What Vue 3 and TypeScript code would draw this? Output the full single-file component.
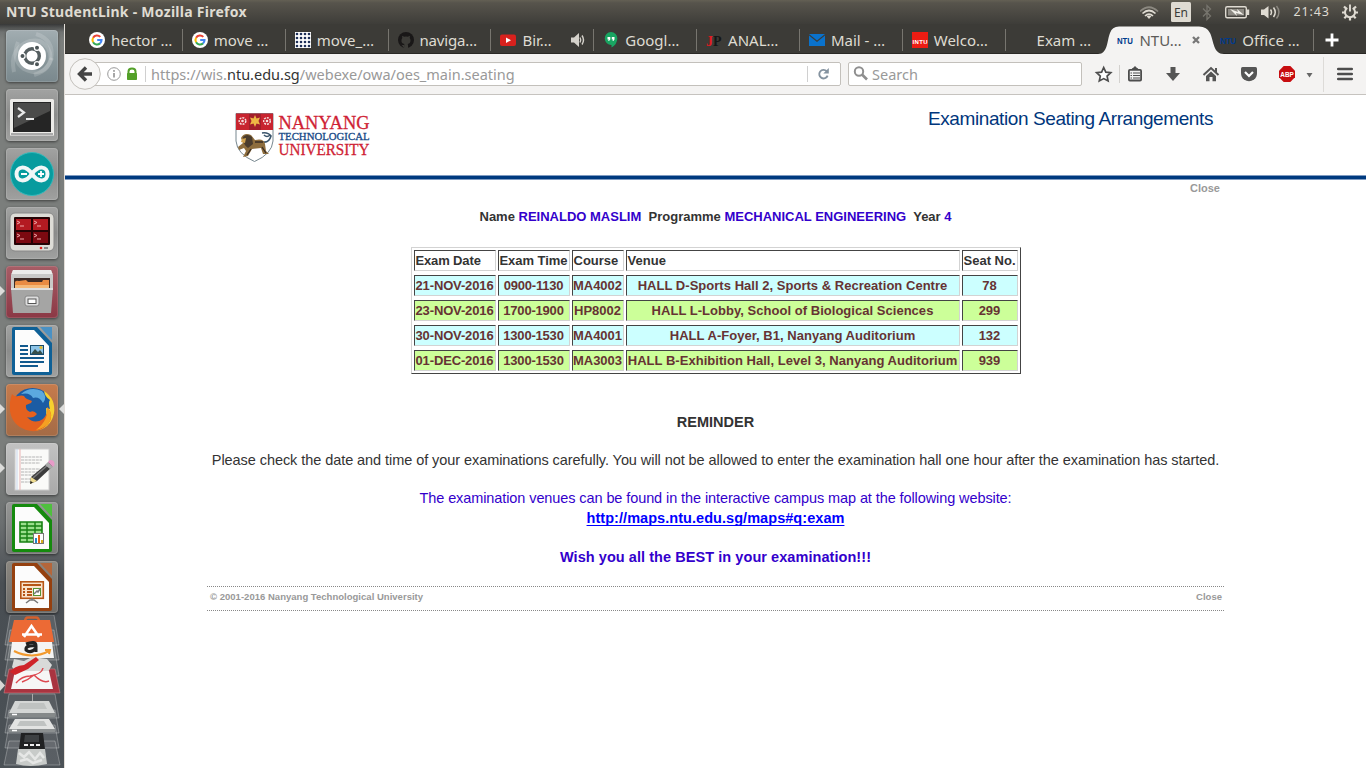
<script setup lang="ts">
interface Tab { label: string; icon: string; sep: boolean; sound?: boolean }
const tabs: Tab[] = [
  { label: 'hector …', icon: 'google', sep: true },
  { label: 'move …', icon: 'google', sep: true },
  { label: 'move_…', icon: 'dots', sep: true },
  { label: 'naviga…', icon: 'github', sep: true },
  { label: 'Bir…', icon: 'youtube', sep: true, sound: true },
  { label: 'Googl…', icon: 'hangouts', sep: true },
  { label: 'ANAL…', icon: 'jp', sep: true },
  { label: 'Mail - …', icon: 'mail', sep: true },
  { label: 'Welco…', icon: 'intu', sep: true },
  { label: 'Exam …', icon: 'blank', sep: false },
  { label: 'NTU…', icon: 'ntu', sep: false },
  { label: 'Office …', icon: 'ntu', sep: true },
]
const activeTab = 10

const launchers = ['dash', 'terminal', 'arduino', 'terminator', 'files', 'writer', 'firefox', 'gedit', 'calc', 'impress']
const running = ['files', 'firefox', 'gedit']

const columns = ['date', 'time', 'course', 'venue', 'seat']
const heads = ['Exam Date', 'Exam Time', 'Course', 'Venue', 'Seat No.']
const exams = [
  ['21-NOV-2016', '0900-1130', 'MA4002', 'HALL D-Sports Hall 2, Sports & Recreation Centre', '78'],
  ['23-NOV-2016', '1700-1900', 'HP8002', 'HALL L-Lobby, School of Biological Sciences', '299'],
  ['30-NOV-2016', '1300-1530', 'MA4001', 'HALL A-Foyer, B1, Nanyang Auditorium', '132'],
  ['01-DEC-2016', '1300-1530', 'MA3003', 'HALL B-Exhibition Hall, Level 3, Nanyang Auditorium', '939'],
]
</script>

<template>
  <div class="desktop">
    <header class="panel">
      <span class="wintitle">NTU StudentLink - Mozilla Firefox</span>
      <svg class="indicators" width="226" height="24" viewBox="1140 0 226 24">
        <g fill="none" stroke-width="1.7">
          <path d="M1140 11.5Q1149 3 1158 11.5" stroke="#8b8880" />
          <path d="M1142.500 13.500Q1149 7.500 1155.500 13.500M1145 16Q1149 12 1153 16" stroke="#dfdbd2" />
        </g>
        <path d="M1146.600 16.300Q1149 14.600 1151.400 16.300L1149 19z" fill="#dfdbd2" />
        <rect x="1171" y="2" width="20" height="20" rx="1.500" fill="#dfdbd2" />
        <text x="1174" y="17" font-size="12" textLength="14" fill="#3c3b37" class="ui">En</text>
        <path d="M1203 8.500L1210.500 16L1207 19.500V5.500L1210.500 9L1203 16.500" fill="none" stroke="#77756e" stroke-width="1.300" />
        <rect x="1225.700" y="6.700" width="20.600" height="11" rx="1.500" fill="none" stroke="#dfdbd2" stroke-width="1.400" />
        <rect x="1228" y="9" width="16" height="6.500" fill="#8d8a83" />
        <rect x="1247" y="9.500" width="2.200" height="5.500" fill="#dfdbd2" />
        <path d="M1230 9L1238 12L1237 9L1244 15L1236 13L1237 16z" fill="#f2f0ea" />
        <path d="M1261 9.500H1264L1268.500 6V18.500L1264 15H1261z" fill="#dfdbd2" />
        <path d="M1270.500 9.500Q1272.500 12.200 1270.500 15M1273.500 7.500Q1277 12.200 1273.500 17" fill="none" stroke="#dfdbd2" stroke-width="1.500" />
        <path d="M1276.500 6Q1281.500 12.200 1276.500 18.500" fill="none" stroke="#8b8880" stroke-width="1.400" />
        <text x="1293.500" y="16" font-size="12.500" textLength="35.500" fill="#dfdbd2" class="ui">21:43</text>
        <g fill="none" stroke="#dfdbd2">
          <path d="M1347.300 8A5 5 0 1 0 1352.700 8" stroke-width="2" />
          <path d="M1350 4.500V11.500" stroke-width="1.900" />
          <path d="M1342 12.500H1345M1355 12.500H1358M1350 17V20.500M1344 6.500L1346.300 8.800M1356 6.500L1353.700 8.800M1344.300 18.200L1346.300 16.200M1355.700 18.200L1353.700 16.200" stroke-width="2.200" />
        </g>
      </svg>
    </header>

    <div class="workspace">
      <aside class="launcher">
        <div v-for="l in launchers" :key="l" class="tile" :class="l">
          <i v-if="running.includes(l)" class="pip"></i>
          <i v-if="l === 'firefox'" class="pip right"></i>
          <svg width="52" height="52" viewBox="0 0 52 52">
            <g v-if="l === 'dash'">
              <g fill="none" stroke="#fff" stroke-opacity=".16" stroke-width="4">
                <path d="M8 42Q3 18 24 11Q39 8 44 23Q47 39 28 45" />
                <path d="M12 12Q5 30 18 39Q38 49 46 28" />
                <path d="M30 4Q49 10 45 30" />
              </g>
              <circle cx="26" cy="26" r="14" fill="#fff" />
              <circle cx="26" cy="26" r="7.300" fill="none" stroke="#555e60" stroke-width="3.400" />
              <g stroke="#fff" stroke-width="1.200" fill="#4c5557"><circle cx="16.500" cy="26" r="2.600" /><circle cx="31" cy="17.700" r="2.600" /><circle cx="31" cy="34.300" r="2.600" /></g>
            </g>
            <g v-else-if="l === 'terminal'">
              <rect x="4" y="10" width="44" height="37" rx="1.500" fill="#ecebe8" />
              <rect x="5" y="44" width="42" height="2.500" fill="#aaa" />
              <rect x="7" y="13" width="38" height="30" fill="#252525" />
              <path d="M8 14H44V22L8 39z" fill="#4b4b4a" />
              <path d="M12 19L18 23.500L12 28M20 30H28" fill="none" stroke="#e9e9e9" stroke-width="2.200" />
            </g>
            <g v-else-if="l === 'arduino'">
              <circle cx="26" cy="26" r="21.500" fill="#079b9e" stroke="#35b9bb" />
              <path d="M26 26C19.500 16.500 10.500 18.500 10.500 26S19.500 35.500 26 26S41.500 18.500 41.500 26S32.500 35.500 26 26z" fill="none" stroke="#f1f7f7" stroke-width="4" />
              <path d="M15 26H21M32 26H38M35 23V29" stroke="#fff" stroke-width="1.800" />
            </g>
            <g v-else-if="l === 'terminator'">
              <rect x="4" y="6" width="44" height="38" rx="5" fill="#dddcd6" stroke="#888" />
              <rect x="8" y="10" width="36" height="28" rx="1" fill="#260305" />
              <path d="M10 12H25V23H10zM27 12H42V23H27z" fill="#b31a21" />
              <path d="M10 25H25V36H10zM27 25H42V36H27z" fill="#7c0910" />
              <path d="M11 14L14 15.500L11 17M14 19H18M28 14L31 15.500L28 17M31 19H35M11 27L14 28.500L11 30M14 32H18M28 27L31 28.500L28 30M31 32H35" fill="none" stroke="#f0a6a8" />
              <circle cx="35" cy="41" r="1.300" fill="#e1201f" /><rect x="38" y="40" width="4" height="2" fill="#888" />
            </g>
            <g v-else-if="l === 'files'">
              <path d="M7 4H45L47 9V22H5V9z" fill="#c9c9c7" />
              <path d="M7 4H45L46.500 8H5.500z" fill="#ececea" />
              <rect x="8" y="12" width="36" height="12" fill="#3e2b25" />
              <path d="M9 16Q10 14 13 15L20 14L22 16H36L37 14H43V24H9z" fill="#e98b43" />
              <path d="M9 19H43V24H9z" fill="#f4b878" />
              <path d="M5 22H47L45 47H7z" fill="#a5a5a4" />
              <path d="M5 22H47V24H5z" fill="#dedede" />
              <rect x="19" y="30" width="14" height="10" rx="2" fill="#ddd" stroke="#858585" />
              <rect x="22" y="33" width="8" height="4.500" fill="#fff" stroke="#555" />
            </g>
            <g v-else-if="l === 'writer' || l === 'calc' || l === 'impress'">
              <path class="doc" d="M8 2H31L46 18V48Q46 50 44 50H8Q6 50 6 48V4Q6 2 8 2z" />
              <path d="M9 5H28L43 21V47H9z" fill="#fcfcfc" />
              <path class="fold" d="M34 2H46V15z" />
              <g v-if="l === 'writer'">
                <path d="M14 21H22M14 25H22M14 29H22M14 33H38M14 37H38M14 41H32" stroke="#125a8e" stroke-width="2" />
                <rect x="24.500" y="20.500" width="13" height="9" fill="#8cc4e8" stroke="#174b6c" /><path d="M25 29L29 24L32 27L34 25L37 29z" fill="#354f4b" /><circle cx="35" cy="22.500" r="1.600" fill="#e3b82a" />
              </g>
              <g v-else-if="l === 'calc'">
                <path d="M14 20H36V40H14z" fill="#9ade8c" stroke="#168012" stroke-width="1.600" /><path d="M14 24H36M14 28H36M14 32H36M14 36H36M21 20V40M29 20V40" stroke="#168012" stroke-width="1.400" />
                <rect x="27.500" y="31.500" width="10" height="10" fill="#fff" stroke="#777" /><path d="M29 36H31V41H29z" fill="#2687c8" /><path d="M32 33H34V41H32z" fill="#e36415" /><path d="M35 38H37V41H35z" fill="#d8af1e" />
              </g>
              <g v-else>
                <rect x="14.800" y="20.800" width="22.500" height="16.500" fill="#f9e3cb" stroke="#b65516" stroke-width="1.600" />
                <path d="M17 24H35M21 28H26M21 31H26M21 34H26" stroke="#b65516" stroke-width="1.800" /><path d="M17 28H19M17 31H19M17 34H19" stroke="#b65516" stroke-width="2" />
                <rect x="27.500" y="27.500" width="7" height="7" fill="#fff" stroke="#559333" /><path d="M28 33L31 30L32 31L34 28M20 42L24 39H28L32 42M26 37V39" stroke="#777" fill="none" stroke-width="1.500" />
              </g>
            </g>
            <g v-else-if="l === 'firefox'">
              <circle cx="26.500" cy="25" r="21" fill="#1b5ca4" />
              <path d="M15 10Q24 2 36 7Q42 13 37 19Q33 12 27 14Q24 8 15 10z" fill="#5ba9df" />
              <path d="M38 7Q50 15 48 29Q45 45 28 47Q42 39 40 24L44 25Q42 18 44 16Q39 13 38 7z" fill="#f7d02e" />
              <path d="M6 10Q8 13 12 12Q16 11 18 12Q19 14 21 15L26 17L25 19L20 21Q19 26 24 28Q28 26 31 30Q27 35 21 33Q28 41 37 35Q43 29 41 23Q49 31 42 40Q33 50 20 46Q6 41 4 27Q3 18 6 10z" fill="#e4611f" />
              <path d="M41 23Q49 31 42 40Q36 45 30 46Q43 36 41 23z" fill="#f4a022" />
            </g>
            <g v-else>
              <rect x="9" y="6" width="34" height="41" fill="#fafaf8" stroke="#ccc" />
              <path d="M14 6V47" stroke="#eab3b3" /><path d="M11 6V47" stroke="#c9d7ee" />
              <path d="M15 14H36M15 17H36M15 20H34M15 26H34M15 29H36M15 32H30M15 36H28M15 39H24" stroke="#b4b4b4" stroke-dasharray="3 .7" />
              <path d="M24 41L25 34L43 19L47 23L31 38z" fill="#3c3c3c" />
              <path d="M27 35L43 21" stroke="#7b7b7b" stroke-width="1.500" />
              <path d="M24 41L25 34L31 38z" fill="#efdc91" /><path d="M24 41L24.500 38L27 39.500z" fill="#222" />
              <path d="M39 22L42 19L47 24L44 26z" fill="#aaa" /><path d="M42 19L44 17Q49 17 48.500 22L47 24z" fill="#e79bc8" />
            </g>
          </svg>
        </div>
        <svg class="folded" width="64" height="153" viewBox="0 615 64 153">
          <g fill="#fff" fill-opacity=".1" stroke="#fff" stroke-opacity=".28">
            <path d="M10 615H54L59 645H5z" /><path d="M10 630H54L59 660H5z" /><path d="M10 645H54L59 676H5z" />
          </g>
          <path d="M25 622Q25 617.500 28 617.500H36Q39 617.500 39 622" fill="none" stroke="#d5602d" stroke-width="2.500" />
          <path d="M14 620H50L54 642H9z" fill="#ec6a35" />
          <path d="M24 637L31.500 626L39 637M22 634.500H42" fill="none" stroke="#fff" stroke-width="2.500" />
          <path d="M12 642H52L54 658H10z" fill="#f4f4f3" />
          <path d="M26 644Q36 640 36 646V652M36 646Q25 645 26 650Q31 654 36 648" fill="none" stroke="#222" stroke-width="3" />
          <path d="M14 651Q32 660 49 651M45 650H50L49 654" fill="none" stroke="#f29a2e" stroke-width="2" />
          <path d="M9 669H55L60 693H4z" fill="#a93440" stroke="#d48b90" stroke-opacity=".5" />
          <path d="M14 659L24 661L32 657L47 659L52 665L47 674H18L12 667z" fill="#d9dad9" />
          <path d="M15 671H49L53 689H11z" fill="#f6f6f6" />
          <path d="M10 672Q14 666 24 665L36 657L39 660L28 669L15 675z" fill="#cf2429" />
          <path d="M16 683Q22 676 30 676Q42 674 43 668M22 682Q28 680 34 675Q43 684 49 681" fill="none" stroke="#dd4850" stroke-width="1.500" />
          <g fill="#fff" fill-opacity=".08" stroke="#fff" stroke-opacity=".28">
            <path d="M9 694H55L59 718H5z" /><path d="M9 710H55L59 733H5z" /><path d="M9 725H55L59 748H5z" /><path d="M9 741H55L60 765H4z" />
          </g>
          <path d="M32.500 694V706" stroke="#aaa" />
          <path d="M15 701H49L55 713H9z" fill="#d4d6d5" /><path d="M9 713H55V717H9z" fill="#85898a" />
          <path d="M15 719H49L55 729H9z" fill="#e2e3e2" /><path d="M9 729H55V732H9z" fill="#8b8f90" />
          <path d="M20 703H44L47 709H17zM20 721H44L47 726H17z" fill="#bfc2c1" />
          <path d="M12 714.500H17M12 730.500H17" stroke="#fff" stroke-width="1.500" />
          <path d="M18 749L16 764Q30 768 47 764L45 749z" fill="#c8cbc9" />
          <path d="M19 753L24 757L29 752L35 759L40 753L44 758M20 761L27 759L33 763L42 760" stroke="#e6e7e6" stroke-width="2.500" fill="none" />
          <path d="M21 733H43L45 749H19z" fill="#202122" /><path d="M25 735H39V742H24z" fill="#3d4042" /><path d="M24 745H28M30 745H34M36 745H40" stroke="#eee" stroke-width="2" />
          <path d="M0 680L5 685.500L0 691z" fill="#d8d8d6" />
        </svg>
      </aside>

      <main class="browser">
        <nav class="tabs">
          <div v-for="(t, i) in tabs" :key="i" class="tab" :class="[t.icon, { sep: t.sep, active: i === activeTab }]">
            <svg v-if="i === activeTab" class="tabshape" width="126" height="28" viewBox="0 0 126 28">
              <path d="M0 28C10 28 9 14 12 7Q14 .5 21 .5H101Q109 .5 112 7C116 15 115 28 126 28z" fill="#f4f3f2" />
            </svg>
            <svg class="fav" width="16" height="16" viewBox="0 0 16 16">
              <g v-if="t.icon === 'google'">
                <circle cx="8" cy="8" r="8" fill="#fff" />
                <g fill="none" stroke-width="2.100">
                  <path d="M4.100 5.700A4.500 4.500 0 0 1 11.300 4.900" stroke="#ea4335" />
                  <path d="M4.100 10.300A4.500 4.500 0 0 1 4.100 5.700" stroke="#fbbc05" />
                  <path d="M4.100 10.300A4.500 4.500 0 0 0 11 11.400" stroke="#34a853" />
                  <path d="M8.200 8H12.500Q12.500 10.200 11 11.400" stroke="#4285f4" />
                </g>
              </g>
              <g v-else-if="t.icon === 'dots'">
                <rect width="16" height="16" fill="#fff" />
                <g fill="#1f3059"><template v-for="y in 4" :key="y"><circle v-for="x in 4" :key="x" :cx="x * 4 - 2" :cy="y * 4 - 2" r="1.300" /></template></g>
              </g>
              <g v-else-if="t.icon === 'github'">
                <circle cx="8" cy="8" r="8" fill="#191717" />
                <path d="M6 16V13Q3 13.500 2.500 11.500M6.300 12Q3 11.500 3.500 8Q3.600 6.800 4.300 6L4 3.800L6.200 4.800Q8 4.300 9.800 4.800L12 3.800L11.700 6Q12.500 6.800 12.500 8Q12.800 11.500 9.700 12L10 13V16H6z" fill="#3c3b37" />
              </g>
              <g v-else-if="t.icon === 'youtube'">
                <rect y="2.500" width="16" height="11.500" rx="2" fill="#d8211d" /><path d="M6 5.500L11 8.200L6 11z" fill="#fff" />
              </g>
              <g v-else-if="t.icon === 'hangouts'">
                <path d="M8 0A6.300 6.300 0 0 1 14.300 6.700Q14 12.500 8.500 15.500V13A6.400 6.400 0 0 1 8 0z" fill="#19a562" />
                <path d="M4.500 5H7.300V7.500L6 9H5.200L5.700 7.500H4.500zM8.800 5H11.500V7.500L10.300 9H9.500L10 7.500H8.800z" fill="#fff" />
              </g>
              <g v-else-if="t.icon === 'jp'" class="serif">
                <text x="0" y="13.500" font-size="14" fill="#e01a22">J</text><text x="7" y="13.500" font-size="14" fill="#161616">P</text>
              </g>
              <g v-else-if="t.icon === 'mail'">
                <path d="M0 2H16L8 8.500z" fill="#0a72cc" /><path d="M0 3.500L8 10L16 3.500V14H0z" fill="#0a72cc" />
              </g>
              <g v-else-if="t.icon === 'intu'">
                <rect width="16" height="16" fill="#ec1c13" /><text x=".5" y="12" font-size="6" textLength="15" class="heavy" fill="#fff">INTU</text>
              </g>
              <g v-else-if="t.icon === 'ntu'">
                <text x="0" y="11.500" font-size="8.500" textLength="16" lengthAdjust="spacingAndGlyphs" class="heavy" fill="#003a8c">NTU</text>
              </g>
            </svg>
            <span class="label">{{ t.label }}</span>
            <svg v-if="t.sound" class="sound" width="15" height="16" viewBox="0 0 15 16">
              <path d="M0 5.500H3L8 1V15L3 10.500H0z" fill="#d5d2cb" /><path d="M9 5.500Q10.500 8 9 10.500M11 3.500Q14 8 11 12.500" fill="none" stroke="#d5d2cb" stroke-width="1.400" />
            </svg>
            <svg v-if="i === activeTab" class="close" width="8" height="8" viewBox="0 0 8 8"><path d="M1 1L7 7M7 1L1 7" stroke="#777" stroke-width="2.300" /></svg>
          </div>
          <svg class="plus" width="14" height="14" viewBox="0 0 14 14"><path d="M7 .5V13.500M.5 7H13.500" stroke="#fff" stroke-width="2.800" /></svg>
        </nav>

        <div class="toolbar">
          <div class="url">
            <svg class="back" width="32" height="32" viewBox="0 0 32 32">
              <circle cx="16" cy="16" r="15.300" fill="#f7f6f5" stroke="#c3c0bb" />
              <path d="M17 9.500L10.500 16L17 22.500M11 16H23" fill="none" stroke="#444" stroke-width="3.400" />
            </svg>
            <svg class="lock" width="40" height="18" viewBox="0 0 40 18">
              <circle cx="8" cy="9" r="6.300" fill="none" stroke="#999" /><path d="M8 8V12.500" stroke="#888" stroke-width="1.500" /><circle cx="8" cy="5.900" r=".9" fill="#888" />
              <path d="M22.500 9V6.500Q22.500 3.500 26 3.500T29.500 6.500V9" fill="none" stroke="#53a028" stroke-width="2" /><rect x="21" y="8" width="10" height="7" rx=".8" fill="#53a028" />
              <path d="M39.500 1V17" stroke="#d0d0d0" />
            </svg>
            <span class="addr">https://wis.<b>ntu.edu.sg</b>/webexe/owa/oes_main.seating</span>
            <svg class="reload" width="34" height="24" viewBox="0 0 34 24">
              <path d="M.5 4V20" stroke="#d0d0d0" />
              <path d="M19.700 9.200A4.300 4.300 0 1 0 20.600 13.700" fill="none" stroke="#8593a0" stroke-width="1.900" /><path d="M21.800 6V11.500H16.300z" fill="#8593a0" />
            </svg>
          </div>
          <div class="search">
            <svg width="16" height="16" viewBox="0 0 16 16"><circle cx="6" cy="5.500" r="4.200" fill="none" stroke="#8f8f8f" stroke-width="2" /><path d="M9 8.500L14 13.500" stroke="#8f8f8f" stroke-width="2.600" /></svg>
            <span class="hint">Search</span>
          </div>
          <svg class="tools" width="270" height="40" viewBox="1090 54 270 40">
            <path d="M1103.700 67.500L1105.800 72.100L1110.800 72.700L1107.100 76.100L1108.100 81L1103.700 78.600L1099.300 81L1100.300 76.100L1096.600 72.700L1101.600 72.100z" fill="#fff" stroke="#4d4d4d" stroke-width="1.700" />
            <path d="M1119.500 65V83" stroke="#d3d1ce" />
            <rect x="1128.900" y="69.900" width="12.200" height="10.600" rx="1" fill="#f4f3f2" stroke="#4d4d4d" stroke-width="1.800" />
            <path d="M1131 70L1132.500 68H1133L1135 66L1137 68H1137.500L1139 70z" fill="#4d4d4d" />
            <path d="M1130.500 73H1132M1130.500 75.500H1132M1130.500 78H1132M1133 73H1140M1133 75.500H1140M1133 78H1140" stroke="#4d4d4d" stroke-width="1.100" />
            <path d="M1170.500 67H1175.500V73H1180L1173 81L1166 73H1170.500z" fill="#555" />
            <path d="M1203.500 75L1211 68L1218.500 75" fill="none" stroke="#555" stroke-width="2" /><path d="M1211 71.500L1216 76V81.300H1212.500V77H1209.500V81.300H1206V76z" fill="#555" /><path d="M1215 68H1217V73L1215 71z" fill="#555" />
            <path d="M1242.500 67H1255.500Q1257 67 1257 68.500V73Q1257 77 1254 79.500Q1249 83 1244 79.500Q1241 77 1241 73V68.500Q1241 67 1242.500 67z" fill="#555" /><path d="M1245 72L1249 76L1253 72" fill="none" stroke="#fff" stroke-width="2.200" />
            <path d="M1283.700 66H1290.300L1295 70.700V77.300L1290.300 82H1283.700L1279 77.300V70.700z" fill="#c70d10" /><text x="1280.300" y="76.800" font-size="7.500" textLength="13.500" lengthAdjust="spacingAndGlyphs" class="heavy" fill="#fff">ABP</text>
            <path d="M1306.500 73H1312.500L1309.500 77.500z" fill="#666" />
            <path d="M1323.500 57V92" stroke="#dddbd8" />
            <path d="M1338.300 69H1351.700M1338.300 74H1351.700M1338.300 79H1351.700" stroke="#4d4d4d" stroke-width="2.700" stroke-linecap="round" />
          </svg>
        </div>

        <section class="page">
          <div class="masthead">
            <svg class="logo" width="136" height="50" viewBox="0 0 136 50">
              <path d="M1 .5H38V28Q37 41 19.500 48.500Q2 41 1 28z" fill="#fff" stroke="#77878f" />
              <path d="M1 .5H38V17H1z" fill="#c8242f" />
              <path d="M14 1H26V17H14z" fill="#a31f2b" />
              <g fill="none" stroke="#f6dfe0" stroke-width="1.500"><circle cx="7.500" cy="8" r="3.300" stroke-dasharray="2 1" /><circle cx="32" cy="8" r="3.300" stroke-dasharray="2 1" /></g>
              <g fill="#f6dfe0"><circle cx="7.500" cy="8" r="1.300" /><circle cx="32" cy="8" r="1.300" /></g>
              <path d="M20 2L21.500 5.500L25 4.500L23.500 8L25 11.500L21.500 10.500L20 14L18.500 10.500L15 11.500L16.500 8L15 4.500L18.500 5.500z" fill="#eeb845" />
              <path d="M28 29Q34 30 36 23Q33 19 27 20M29 22Q32 25 35 22" fill="none" stroke="#39546b" stroke-width="1.600" />
              <path d="M6 25Q9 19 16 22L20 27Q29 25 30 31L31 38L34 41H28L26 35L17 36L13 43L8 44L11 38L9 35L4 37L3 34L8 30z" fill="#8d6d3d" />
              <path d="M8 24Q12 20 17 24L18 31L13 35Q8 32 8 24z" fill="#4a3c2d" /><path d="M7 26L11 25L10 30L6 29z" fill="#d3a44f" />
              <path d="M20 29L28 29M16 36L12 42M27 34L31 40" stroke="#382d25" stroke-width="1.300" />
              <g class="brand">
                <text x="43.500" y="16" font-size="19.500" textLength="91" lengthAdjust="spacingAndGlyphs" fill="#cf1f35" stroke="#cf1f35">NANYANG</text>
                <text x="43.500" y="27" font-size="10.500" textLength="91" lengthAdjust="spacingAndGlyphs" fill="#174a87" stroke="#174a87">TECHNOLOGICAL</text>
                <text x="43.500" y="41.500" font-size="17.500" textLength="91" lengthAdjust="spacingAndGlyphs" fill="#cf1f35" stroke="#cf1f35">UNIVERSITY</text>
              </g>
            </svg>
            <h1>Examination Seating Arrangements</h1>
          </div>
          <div class="rule"></div>
          <a class="closetop">Close</a>

          <p class="who">Name <em>REINALDO MASLIM</em>&nbsp; Programme <em>MECHANICAL ENGINEERING</em>&nbsp; Year <em>4</em></p>

          <div class="seating">
            <div v-for="(h, k) in heads" :key="h" class="cell head" :class="columns[k]">{{ h }}</div>
            <template v-for="(row, r) in exams" :key="r">
              <div v-for="(c, k) in row" :key="k" class="cell" :class="[columns[k], r % 2 ? 'green' : 'cyan']">{{ c }}</div>
            </template>
          </div>

          <p class="line reminder">REMINDER</p>
          <p class="line notice">Please check the date and time of your examinations carefully. You will not be allowed to enter the examination hall one hour after the examination has started.</p>
          <p class="line venues">The examination venues can be found in the interactive campus map at the following website:</p>
          <p class="line link"><a>http://maps.ntu.edu.sg/maps#q:exam</a></p>
          <p class="line wish">Wish you all the BEST in your examination!!!</p>

          <footer class="foot"><span>© 2001-2016 Nanyang Technological University</span><span>Close</span></footer>
        </section>
      </main>
    </div>
  </div>
</template>

<style>
html, body { margin: 0; overflow: hidden; background: #fff; }
</style>

<style scoped>
.desktop { width: 1366px; height: 768px; overflow: hidden; font-family: "Noto Sans", "Open Sans", sans-serif; }
.desktop *, .desktop { box-sizing: border-box; }
svg { display: block; flex: none; }
p, h1 { margin: 0; }
.panel { height: 24px; display: flex; align-items: center; justify-content: space-between; background: linear-gradient(#646054, #57544c 12%, #3e3d39); }
.wintitle { margin-left: 6px; font-weight: 700; font-size: 14px; letter-spacing: .27px; line-height: 24px; color: #dfdbd2; white-space: nowrap; }
.ui { font-family: "Noto Sans", sans-serif; }
.workspace { display: flex; height: 744px; }

.launcher { width: 65px; flex: none; border-right: 1px solid #e3ded8; padding: 6px 0 0 6px; display: flex; flex-direction: column; gap: 7px; background: linear-gradient(#373838, #707372 8px, #7b7e7c 16px, #7b7e7c 440px, #6b6f70 500px, #4a4f54 560px, #484e53 650px, #4c5257); }
.tile { position: relative; width: 52px; height: 52px; flex: none; border-radius: 4px; background: linear-gradient(#a2a3a2, #8b8c8b 50%, #a0a1a0); box-shadow: 0 0 0 1px rgba(255,255,255,.13) inset, 0 1px 3px rgba(0,0,0,.5); }
.tile.dash { background: linear-gradient(#a2adb1, #8b999d 50%, #7a888d); }
.tile.files { background: linear-gradient(#a75d66, #8b3845); }
.tile.firefox { background: linear-gradient(#c67b4c, #a46b46); }
.tile.gedit { background: linear-gradient(#c2c2c2, #a8a8a8); }
.tile.calc { background: linear-gradient(#969796, #777977); }
.tile.impress { background: linear-gradient(#8b8780, #6d6c69); }
.pip { position: absolute; left: -6px; top: 20px; border-left: 5px solid #dcdcda; border-top: 5.500px solid transparent; border-bottom: 5.500px solid transparent; }
.pip.right { left: 53px; border-left: 0; border-right: 5px solid #dcdcda; }
.writer .doc { fill: #0e6096; } .writer .fold { fill: #4a91c4; }
.calc .doc { fill: #158a0e; } .calc .fold { fill: #4fc03e; }
.impress .doc { fill: #95400f; } .impress .fold { fill: #b5663a; }
.folded { margin: -5px 0 0 -6px; }

.browser { width: 1301px; background: #fff; }
.tabs { height: 30px; padding-left: 15px; display: flex; align-items: center; background: #3c3b37; border-bottom: 1px solid #2a2926; }
.tab { position: relative; width: 102.850px; flex: none; height: 30px; padding-left: 9px; display: flex; align-items: center; color: #dfdbd2; }
.tab.sep { background: linear-gradient(#77756f, #77756f) right 5px / 1px 22px no-repeat; }
.tab .fav { position: relative; margin-top: 2px; }
.label { margin-left: 6px; font-size: 15px; line-height: 20px; white-space: nowrap; margin-top: 2px; }
.github .label { letter-spacing: -.2px; }
.tab.active { color: #5c5b58; }
.tabshape { position: absolute; left: -10px; top: 2px; }
.active .label { position: relative; }
.sound { position: absolute; left: 80px; top: 8px; }
.close { position: absolute; left: 84px; top: 12px; }
.plus { margin: 3px 0 0 11px; }
.serif { font-family: "Liberation Serif", serif; font-weight: 700; }
.heavy { font-family: "Liberation Sans", sans-serif; font-weight: 700; }

.toolbar { height: 41px; display: flex; align-items: center; background: #f4f3f2; border-bottom: 1px solid #c6c3bf; padding-left: 4px; }
.url { width: 772px; height: 24px; display: flex; align-items: center; background: linear-gradient(#fff, #fff) 20px 0 / 752px 24px no-repeat; position: relative; }
.url::before { content: ""; position: absolute; left: 20px; right: 0; top: 0; bottom: 0; border: 1px solid #c3c0bb; border-radius: 0 2px 2px 0; }
.back { position: relative; }
.lock { margin-left: 5px; }
.addr { margin-left: 5px; font-size: 14.500px; color: #999; white-space: nowrap; }
.addr b { font-weight: 400; color: #333; }
.reload { margin-left: auto; }
.search { width: 234px; height: 24px; margin-left: 7px; border: 1px solid #c3c0bb; border-radius: 2px; background: #fff; display: flex; align-items: center; padding-left: 4px; }
.hint { margin-left: 3px; font-size: 14.500px; color: #999; }
.tools { margin-left: 8px; }

.page { height: 673px; font-family: "Liberation Sans", Arial, sans-serif; color: #333; display: flex; flex-direction: column; }
.masthead { height: 80px; padding: 18px 153px 0 170px; display: flex; justify-content: space-between; }
.brand { font-family: "Liberation Serif", serif; stroke-width: .3px; }
h1 { font-size: 19px; font-weight: 400; letter-spacing: -.4px; line-height: 24px; color: #00367c; margin-top: -6px; white-space: nowrap; }
.rule { height: 5px; flex: none; background: linear-gradient(#7f9bc1 1px, #003a7f 1px, #003a7f 4px, #7f9bc1 4px); }
.closetop { align-self: flex-end; margin-right: 146px; font-size: 11px; line-height: 16px; font-weight: 700; color: #999; }
.who { margin-top: 11px; height: 20px; line-height: 20px; font-size: 13px; font-weight: 700; text-align: center; white-space: nowrap; }
.who em { font-style: normal; color: #30c; }
.seating { align-self: center; margin-top: 20px; width: 610px; height: 127px; border: 1px solid; border-color: #d3d3d3 #444 #444 #d3d3d3; padding: 2px; display: grid; grid-template-columns: 82px 72px 52px 334px 56px; grid-auto-rows: 21px; gap: 4px 2px; }
.cell { border: 1px solid; border-color: #444 #d3d3d3 #d3d3d3 #444; font-size: 13px; font-weight: 700; line-height: 19px; text-align: center; white-space: nowrap; color: #633; }
.cell.head { text-align: left; padding-left: 1px; color: #333; }
.date { letter-spacing: -.14px; }
.time { letter-spacing: -.2px; }
.time.head { letter-spacing: -.05px; }
.venue { letter-spacing: .03px; }
.cyan { background: #cff; }
.green { background: #cf9; }
.line { text-align: center; height: 20px; line-height: 20px; font-size: 14.500px; white-space: nowrap; flex: none; }
.reminder { margin-top: 38px; font-weight: 700; }
.notice { margin-top: 18px; letter-spacing: -.065px; }
.venues { margin-top: 18px; letter-spacing: -.093px; color: #30c; }
.link { font-weight: 700; letter-spacing: .05px; color: #00f; }
.link a { text-decoration: underline; text-decoration-thickness: 1px; text-underline-offset: 2px; text-decoration-skip-ink: none; }
.wish { margin-top: 19px; font-weight: 700; letter-spacing: .06px; color: #30c; }
.foot { align-self: center; width: 1017px; height: 25px; margin-top: 19px; padding: 0 2px 0 3px; display: flex; justify-content: space-between; line-height: 20px; font-size: 9.500px; letter-spacing: .02px; font-weight: 700; color: #999; border-top: 1px dotted #888; border-bottom: 1px dotted #888; }
</style>
